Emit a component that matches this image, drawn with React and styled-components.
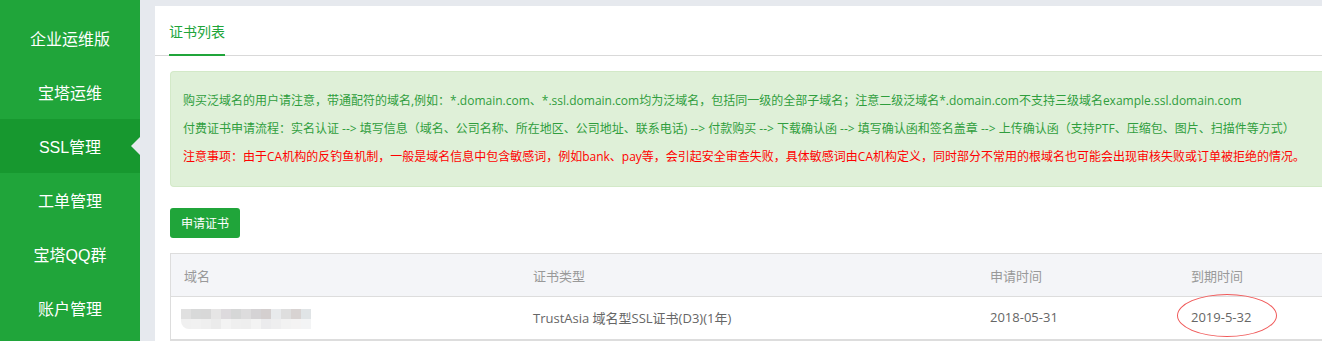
import styled, { createGlobalStyle } from 'styled-components'

const GlobalStyle = createGlobalStyle`
  html, body {
    margin: 0;
    padding: 0;
    background: #e6e9ee;
    font-family: "Open Sans", "Noto Sans CJK SC", sans-serif;
    overflow: hidden;
  }
`

const Layout = styled.div`
  display: flex;
  width: 1322px;
  height: 341px;
  overflow: hidden;
`

const Sidebar = styled.nav`
  width: 140px;
  flex-shrink: 0;
  background: #20a53a;
  padding-top: 11px;
  box-sizing: border-box;
  font-family: "Liberation Sans", "Noto Sans CJK SC", sans-serif;
`

const MenuItem = styled.div`
  position: relative;
  height: 54px;
  display: flex;
  align-items: center;
  justify-content: center;
  color: #fff;
  font-size: 16px;
  background: ${p => (p.$active ? '#17982f' : 'transparent')};

  ${p =>
    p.$active &&
    `
    &::after {
      content: '';
      position: absolute;
      right: 0;
      top: 50%;
      margin-top: -9px;
      border-style: solid;
      border-width: 9px 9px 9px 0;
      border-color: transparent #e6e9ee transparent transparent;
    }
  `}
`

const Main = styled.main`
  flex: 1;
  padding: 6px 0 0 15px;
  min-width: 0;
`

const Panel = styled.section`
  background: #fff;
  height: 100%;
  width: 1300px;
`

const TabBar = styled.div`
  display: flex;
  height: 49px;
  padding-left: 14px;
  border-bottom: 1px solid #d9d9d9;
`

const Tab = styled.div`
  display: flex;
  align-items: center;
  font-size: 14px;
  color: #20a53a;
  padding-top: 2px;
  border-bottom: 2px solid #20a53a;
  margin-bottom: -1px;
`

const Content = styled.div`
  padding: 15px 0 0 15px;
`

const Notice = styled.div`
  background: #dff0d8;
  border: 1px solid #d3e9c8;
  border-right: none;
  border-radius: 4px 0 0 4px;
  padding: 15px 0 15px 12px;
  font-size: 12px;
  line-height: 28px;
  white-space: nowrap;
  height: 84px;
`

const NoticeLine = styled.p`
  margin: 0;
  color: ${p => (p.$warn ? '#ff0000' : '#2f9e3d')};
`

const Button = styled.button`
  margin-top: 21px;
  width: 70px;
  height: 30px;
  border: none;
  border-radius: 3px;
  background: #20a53a;
  color: #fff;
  font-family: inherit;
  font-size: 12px;
  padding: 0;
`

const Table = styled.div`
  margin-top: 15px;
  border: 1px solid #ddd;
  border-right: none;
`

const Row = styled.div`
  display: grid;
  grid-template-columns: 349px 457px 201px 1fr;
  height: 42px;
  align-items: center;
  background: ${p => (p.$head ? '#f4f5f8' : '#fff')};
  border-top: ${p => (p.$head ? 'none' : '1px solid #ddd')};
  border-bottom: ${p => (p.$head ? 'none' : '1px solid #ddd')};
  font-size: 13px;
  color: ${p => (p.$head ? '#999' : '#666')};
`

const Cell = styled.div`
  padding-left: 13px;
  padding-bottom: ${p => (p.$lift ? '2px' : '0')};
  white-space: nowrap;
`

const Mosaic = styled.div`
  display: grid;
  grid-template-columns: repeat(13, 10px);
  grid-auto-rows: 10px;
  margin-left: -3px;
  border-radius: 0 0 0 8px;
  overflow: hidden;
  width: 130px;
  margin-top: 2px;
`

const Pixel = styled.span`
  display: block;
  background: ${p => p.$c};
`

const Circled = styled.span`
  position: relative;
  display: inline-block;

  &::before {
    content: '';
    position: absolute;
    left: -14px;
    top: -14px;
    width: 98px;
    height: 41px;
    border: 1px solid #f05a5a;
    border-radius: 50%;
  }
`

const topRow = ['#e0e0e0', '#d8d9d9', '#d8d8d8', '#e6e5e5', '#dddadd', '#d6d7d7', '#dddcdd', '#d5d3d5', '#d4cfcf', '#e8eaec', '#dedede', '#d8d3d2', '#e0e4e6']
const bottomRow = ['#f0f0f0', '#f1f1f1', '#efefef', '#ebebeb', '#f3f3f3', '#efefef', '#eeeeee', '#f3f3f3', '#ebebed', '#eeeeef', '#f2f2f2', '#f4f3f3', '#f3f4f5']

const menu = ['企业运维版', '宝塔运维', 'SSL管理', '工单管理', '宝塔QQ群', '账户管理']

export default function App() {
  return (
    <>
      <GlobalStyle />
      <Layout>
        <Sidebar>
          {menu.map(m => (
            <MenuItem key={m} $active={m === 'SSL管理'}>{m}</MenuItem>
          ))}
        </Sidebar>
        <Main>
          <Panel>
            <TabBar>
              <Tab>证书列表</Tab>
            </TabBar>
            <Content>
              <Notice>
                <NoticeLine>购买泛域名的用户请注意，带通配符的域名,例如：*.domain.com、*.ssl.domain.com均为泛域名，包括同一级的全部子域名；注意二级泛域名*.domain.com不支持三级域名example.ssl.domain.com</NoticeLine>
                <NoticeLine>付费证书申请流程：实名认证 --&gt; 填写信息（域名、公司名称、所在地区、公司地址、联系电话) --&gt; 付款购买 --&gt; 下载确认函 --&gt; 填写确认函和签名盖章 --&gt; 上传确认函（支持PTF、压缩包、图片、扫描件等方式）</NoticeLine>
                <NoticeLine $warn>注意事项：由于CA机构的反钓鱼机制，一般是域名信息中包含敏感词，例如bank、pay等，会引起安全审查失败，具体敏感词由CA机构定义，同时部分不常用的根域名也可能会出现审核失败或订单被拒绝的情况。</NoticeLine>
              </Notice>
              <Button>申请证书</Button>
              <Table>
                <Row $head>
                  <Cell>域名</Cell>
                  <Cell>证书类型</Cell>
                  <Cell>申请时间</Cell>
                  <Cell>到期时间</Cell>
                </Row>
                <Row>
                  <Cell>
                    <Mosaic>
                      {topRow.concat(bottomRow).map((c, i) => (
                        <Pixel key={i} $c={c} />
                      ))}
                    </Mosaic>
                  </Cell>
                  <Cell $lift>TrustAsia 域名型SSL证书(D3)(1年)</Cell>
                  <Cell $lift>2018-05-31</Cell>
                  <Cell $lift><Circled>2019-5-32</Circled></Cell>
                </Row>
              </Table>
            </Content>
          </Panel>
        </Main>
      </Layout>
    </>
  )
}
